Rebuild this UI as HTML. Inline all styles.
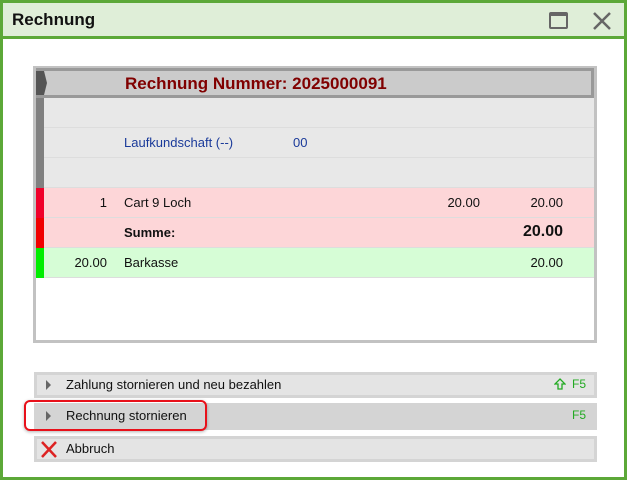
<!DOCTYPE html>
<html><head><style>
*{margin:0;padding:0;box-sizing:border-box}
body{width:627px;height:480px;background:#5ca838;font-family:"Liberation Sans",sans-serif;position:relative;overflow:hidden}
.win{position:absolute;left:3px;top:3px;width:621px;height:474px;background:#fff}
.tb{position:absolute;left:0;top:0;width:621px;height:36px;background:#dfeed8;border-bottom:3px solid #5ca838}
.tb .t{position:absolute;left:9px;top:7px;font-size:17px;font-weight:bold;color:#111}
.a{position:absolute}
.box{position:absolute;left:30px;top:63px;width:564px;height:277px;border:3px solid #c2c2c2;background:#fff}
.hd{position:absolute;left:0;top:-1px;width:558px;height:30px;background:#cbcbcb;border:3px solid #999}
.hd span{position:absolute;left:86px;top:3px;color:#800000;font-weight:bold;font-size:17px}
.row{position:absolute;left:0;width:558px;height:30px;border-bottom:1px solid #ddd;font-size:13px;color:#111}
.row .bar{position:absolute;left:0;top:0;width:8px;height:30px}
.row span{position:absolute;top:7px}
.btn{position:absolute;left:31px;width:563px;border:3px solid #d4d4d4;background:#e4e4e4;font-size:13px;color:#111}
.btn .tri{position:absolute;left:9px;top:5px;width:0;height:0;border-left:5px solid #666;border-top:5px solid transparent;border-bottom:5px solid transparent}
.btn .l{position:absolute;left:29px;top:2px}
.btn .f{position:absolute;right:8px;top:2px;color:#22aa22;font-size:12px}
</style></head><body>
<div class="win">
<div class="tb"><div class="t">Rechnung</div>
<div class="a" style="left:546px;top:9px;width:19px;height:17px;border:2px solid #666;border-top-width:4px;border-radius:2px"></div>
<svg class="a" style="left:589px;top:8px" width="20" height="20"><path d="M2 2L18 18M18 2L2 18" stroke="#666" stroke-width="2.5"/></svg>
</div>
<div class="box">
<div class="a" style="left:0;top:5px;width:8px;height:115px;background:#808080"></div>
<div class="hd"><svg class="a" style="left:-3px;top:0" width="12" height="24"><path d="M0 0H8L11 12L8 24H0Z" fill="#555"/></svg><span>Rechnung Nummer: 2025000091</span></div>
<div class="row" style="top:29px;background:#e8e8e8"><div class="bar" style="background:#808080"></div></div>
<div class="row" style="top:59px;background:#e8e8e8"><div class="bar" style="background:#808080"></div><span style="left:88px;color:#1a3a9a">Laufkundschaft (--)</span><span style="left:257px;color:#1a3a9a">00</span></div>
<div class="row" style="top:89px;background:#e8e8e8"><div class="bar" style="background:#808080"></div></div>
<div class="row" style="top:119px;background:#fdd6d8"><div class="bar" style="background:#f0002a"></div><span style="right:487px">1</span><span style="left:88px">Cart 9 Loch</span><span style="right:114px">20.00</span><span style="right:31px">20.00</span></div>
<div class="row" style="top:149px;background:#fdd6d8"><div class="bar" style="background:#f00000"></div><span style="left:88px;font-weight:bold">Summe:</span><span style="right:31px;font-weight:bold;font-size:16px;top:5px">20.00</span></div>
<div class="row" style="top:179px;background:#d6fdd6"><div class="bar" style="background:#00ee00"></div><span style="right:487px">20.00</span><span style="left:88px">Barkasse</span><span style="right:31px">20.00</span></div>
</div>
<div class="btn" style="top:369px;height:26px"><div class="tri"></div><div class="l">Zahlung stornieren und neu bezahlen</div>
<svg class="a" style="right:28px;top:3px" width="12" height="13"><path d="M6 1L11 6H8V11H4V6H1Z" fill="none" stroke="#22aa22" stroke-width="1.3"/></svg><div class="f">F5</div></div>
<div class="btn" style="top:400px;height:27px;background:#d4d4d4;border-color:#d4d4d4"><div class="tri"></div><div class="l">Rechnung stornieren</div><div class="f">F5</div></div>
<div class="a" style="left:21px;top:397px;width:183px;height:31px;border:2px solid #e8101a;border-radius:6px;box-shadow:0 1px 3px rgba(0,0,0,.3)"></div>
<div class="btn" style="top:433px;height:26px"><svg class="a" style="left:3px;top:1px" width="18" height="19"><path d="M2 2L16 17M16 2L2 17" stroke="#dd2222" stroke-width="2.5"/></svg><div class="l">Abbruch</div></div>
</div>
</body></html>
